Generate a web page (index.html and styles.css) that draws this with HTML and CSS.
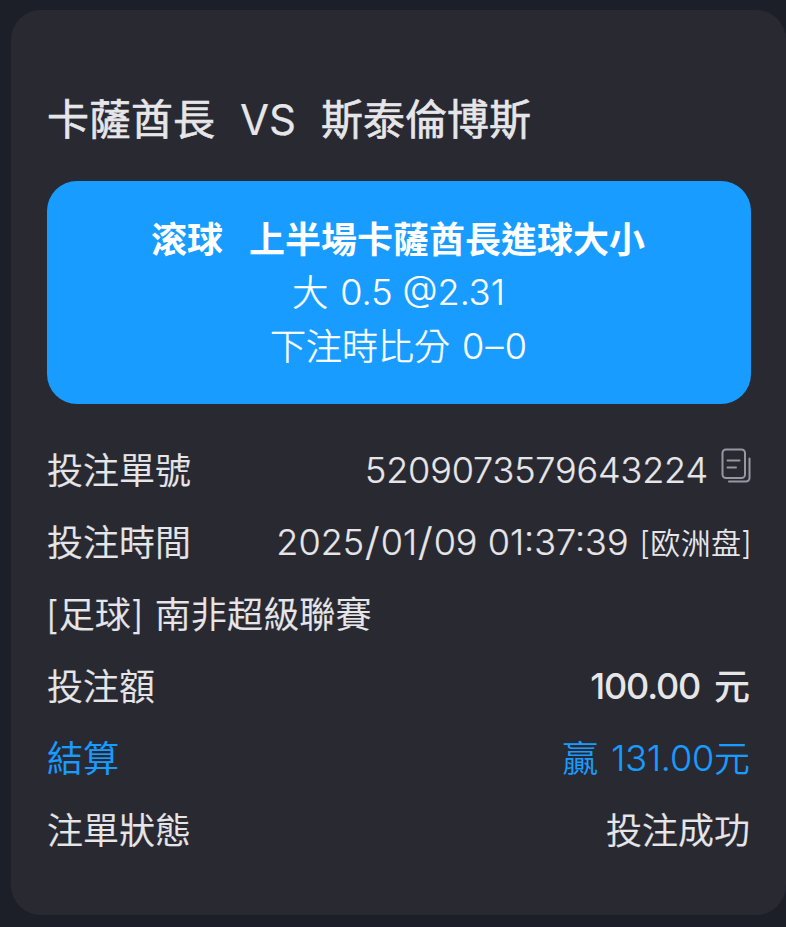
FILE: index.html
```html
<!DOCTYPE html>
<html lang="zh-Hant">
<head>
<meta charset="utf-8">
<title>注單</title>
<link rel="stylesheet" href="styles.css">
</head>
<body>
<main class="card">
  <h1 class="title"><span>卡薩酋長</span><span class="vs">VS</span><span>斯泰倫博斯</span></h1>
  <section class="bet">
    <div class="market"><span>滚球</span><span>上半場卡薩酋長進球大小</span></div>
    <div class="pick"><span>大</span><span class="num odds">0.5 @2.31</span></div>
    <div class="pick"><span>下注時比分</span><span class="num score">0–0</span></div>
  </section>
  <dl class="rows">
    <div class="row"><dt>投注單號</dt><dd><span class="num order">5209073579643224</span><svg class="copy" viewBox="0 0 30 36" fill="none"><rect x="1.5" y="1.5" width="22.5" height="28.5" rx="3.5"/><path d="M6.5 12.5h12M6.5 19.5h8.5M28.500 10.500v19.500a3.500 3.500 0 0 1-3.500 3.500H8"/></svg></dd></div>
    <div class="row"><dt>投注時間</dt><dd><span class="num time">2025<span class="slash">/</span>01<span class="slash">/</span>09 01:37:39</span><span class="zone" lang="zh-Hans"><span class="bracket">[</span>欧洲盘<span class="bracket">]</span></span></dd></div>
    <div class="row"><dt class="league"><span class="sport"><span class="bracket">[</span>足球<span class="bracket">]</span></span><span>南非超級聯賽</span></dt></div>
    <div class="row"><dt>投注額</dt><dd class="stake"><span class="num amount">100.00</span><span>元</span></dd></div>
    <div class="row blue"><dt>結算</dt><dd class="result"><span>贏</span><span class="num win">131.00</span><span>元</span></dd></div>
    <div class="row"><dt>注單狀態</dt><dd class="status">投注成功</dd></div>
  </dl>
</main>
</body>
</html>
```
FILE: styles.css
```css
* { box-sizing: border-box; }
body {
  margin: 0;
  height: 927px;
  padding: 10px 0 12px 11px;
  overflow: hidden;
  background: #1d1f28;
  color: #e6e6e9;
  font-family: Inter, "Noto Sans CJK TC", sans-serif;
  font-size: 36px;
}
.card {
  height: 905px;
  padding: 80px 35px 0 36px;
  border-radius: 30px;
  background: #292932;
}
.title {
  display: flex;
  margin: 0 0 31.400px;
  height: 60px;
  line-height: 60px;
  font-size: 42px;
  font-weight: 400;
  white-space: nowrap;
  -webkit-text-stroke: 0.600px currentColor;
}
.vs { margin: 0 25px 0 25px; -webkit-text-stroke: 0.200px currentColor; }
.bet {
  height: 223px;
  padding: 31px 0 30px;
  border-radius: 30px;
  background: #189cff;
  color: #fff;
}
.market, .pick {
  display: flex;
  justify-content: center;
  height: 54px;
  line-height: 54px;
  white-space: nowrap;
}
.market { gap: 26px; padding-right: 2px; line-height: 56px; font-weight: 700; }
.pick { gap: 12px; padding-right: 1px; font-weight: 300; -webkit-text-stroke: 0.450px currentColor; }
.pick .num { line-height: 53px; -webkit-text-stroke: 0.150px currentColor; }
.score { letter-spacing: 1.200px; margin-right: -1.200px; }
.rows { margin: 30.600px 0 0; }
.row {
  display: flex;
  justify-content: space-between;
  height: 72px;
  line-height: 72px;
  white-space: nowrap;
}
.row .num { line-height: 70px; -webkit-text-stroke: 0.200px currentColor; }
dt, dd { margin: 0; display: flex; font-weight: 350; }
dt, .status { -webkit-text-stroke: 0.200px currentColor; }
.order { letter-spacing: -0.150px; }
.copy {
  width: 30px;
  height: 36px;
  margin: 13px 0 0 13px;
  stroke: #9697a2;
  stroke-width: 2;
  stroke-linecap: round;
}
.slash { display: inline-block; padding: 0 2px; transform: scale(1.200, 1.080); }
.zone {
  margin: 0 -1px 0 11px;
  font-size: 30px;
  line-height: 72px;
  font-family: Inter, "Noto Sans CJK SC", sans-serif;
  letter-spacing: 0.300px;
}
.league { gap: 11px; letter-spacing: 0.150px; }
.sport { margin-left: -1px; }
.bracket { display: inline-block; transform: scaleY(1.080); }
.stake { gap: 14px; padding-right: 1px; font-weight: 500; }
.stake .amount { letter-spacing: -1.200px; -webkit-text-stroke: 0; }
.result, .status { padding-right: 1px; }
.win { margin-left: 13px; letter-spacing: -0.200px; }
.blue { color: #189cff; }
```
